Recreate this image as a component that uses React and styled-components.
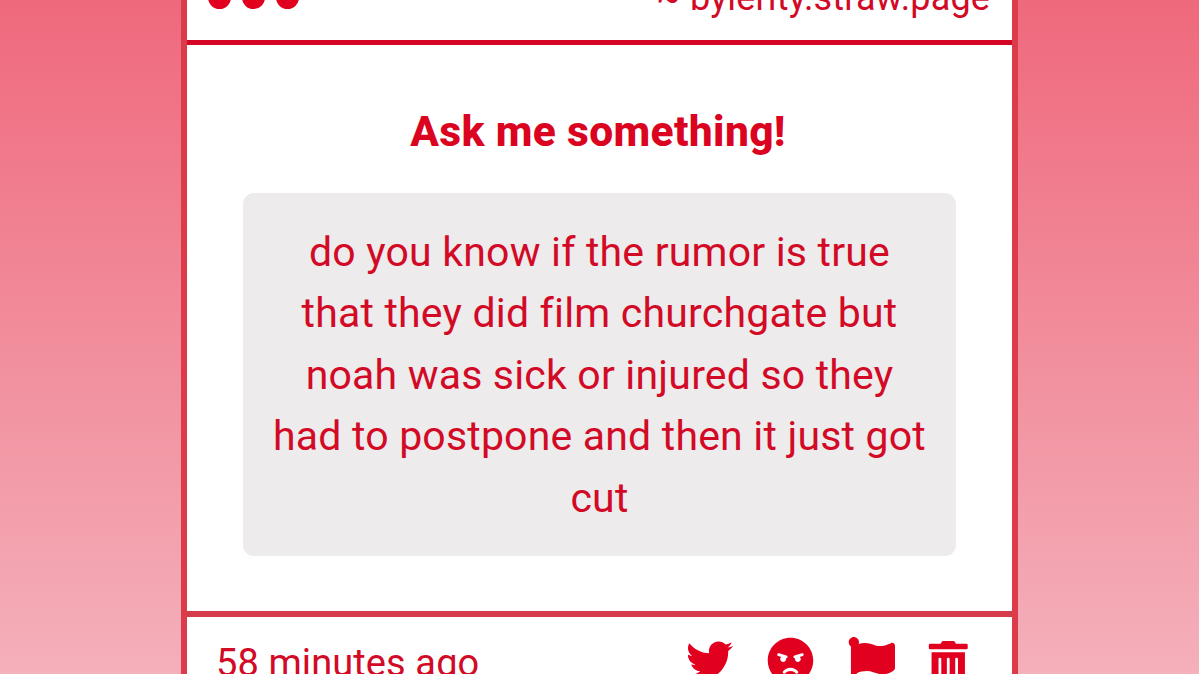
import React from "react";
import styled, { createGlobalStyle } from "styled-components";
import { FaTwitter, FaAngry, FaFlag, FaTrashAlt } from "react-icons/fa";

const message =
  "do you know if the rumor is true that they did film churchgate but noah was sick or injured so they had to postpone and then it just got cut";

const App = () => (
  <>
    <GlobalStyle />
    <Page>
      <Card>
        <Header>
          <Dots>
            <Dot />
            <Dot />
            <Dot />
          </Dots>
          <Handle>~ bylerity.straw.page</Handle>
        </Header>
        <Body>
          <Title>Ask me something!</Title>
          <Message>{message}</Message>
        </Body>
        <Footer>
          <Time>58 minutes ago</Time>
          <Actions>
            <Action aria-label='Share'>
              <FaTwitter />
            </Action>
            <Action aria-label='Block'>
              <FaAngry />
            </Action>
            <Action aria-label='Report'>
              <FaFlag />
            </Action>
            <DeleteAction aria-label='Delete'>
              <FaTrashAlt />
            </DeleteAction>
          </Actions>
        </Footer>
      </Card>
    </Page>
  </>
);

export default App;

const GlobalStyle = createGlobalStyle`
  * {
    box-sizing: border-box;
  }

  body {
    margin: 0;
    overflow: hidden;
  }
`;

const Page = styled.div`
  height: 674px;
  display: flex;
  justify-content: center;
  overflow: hidden;
  background: linear-gradient(#ef697c, #f4b0bb);
  color: #d20a26;
  font-family: Roboto, "Liberation Sans", sans-serif;
`;

const Card = styled.div`
  width: 837px;
  height: 740px;
  flex-shrink: 0;
  display: flex;
  flex-direction: column;
  background: #fff;
  border: solid #dc3b4a;
  border-width: 0 6px;
`;

/* the card is scrolled, so the header starts above the window */
const Header = styled.header`
  height: 85px;
  margin-top: -40px;
  flex-shrink: 0;
  display: flex;
  align-items: center;
  justify-content: space-between;
  padding: 0 22px 5px 21px;
  border-bottom: 5px solid #d50625;
`;

const Dots = styled.div`
  display: flex;
  gap: 11px;
`;

const Dot = styled.span`
  width: 23px;
  height: 23px;
  border-radius: 50%;
  background: #e2001f;
`;

const Handle = styled.span`
  font-size: 36px;
  letter-spacing: 0.15px;
  line-height: 50px;
`;

const Body = styled.main`
  height: 566px;
  flex-shrink: 0;
  padding: 56px 56px 0;
`;

const Title = styled.h1`
  margin: 0 0 30px;
  padding-right: 3px;
  color: #da0420;
  font-size: 42.5px;
  font-weight: 800;
  letter-spacing: 0.35px;
  line-height: 62px;
  text-align: center;
`;

const Message = styled.p`
  height: 363px;
  margin: 0;
  padding: 29px 26px 0;
  border-radius: 11px;
  background: #edebec;
  font-size: 41px;
  letter-spacing: 0.19px;
  line-height: 61.4px;
  text-align: center;
`;

const Footer = styled.footer`
  flex: 1;
  display: flex;
  align-items: flex-start;
  justify-content: space-between;
  padding: 18px 42px 0 29px;
  border-top: 6px solid #d43b4b;
`;

const Time = styled.span`
  font-size: 38px;
  letter-spacing: 0.1px;
  line-height: 56px;
`;

const Actions = styled.div`
  display: flex;
  gap: 34px;
  padding-top: 2px;
`;

const Action = styled.button`
  display: flex;
  align-self: flex-start;
  padding: 0;
  border: 0;
  background: none;
  color: #e2001f;
  font-size: 47px;
`;

/* the bin is drawn a little smaller than the others */
const DeleteAction = styled(Action)`
  margin: 4px 0 0 -3px;
  font-size: 44.5px;
`;
